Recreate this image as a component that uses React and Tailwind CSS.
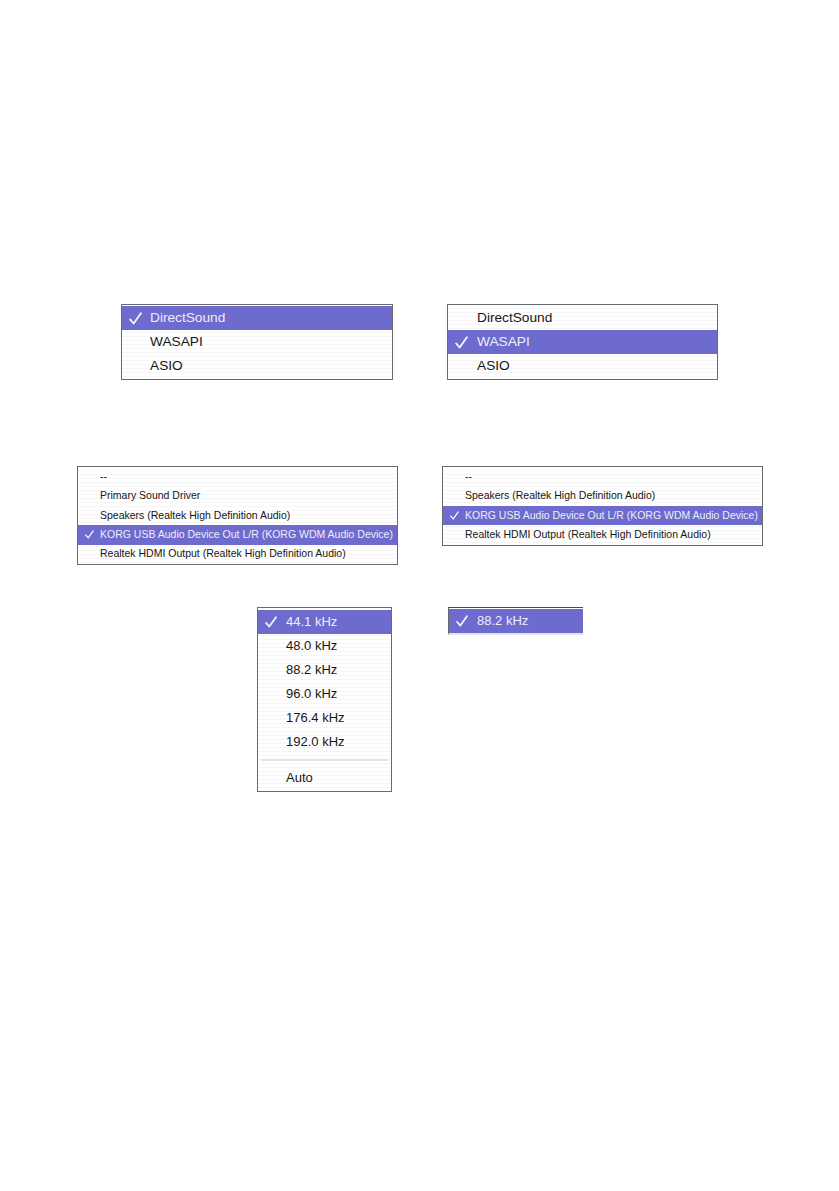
import React from 'react';

const stripes =
  'bg-[repeating-linear-gradient(to_bottom,#ffffff_0px,#ffffff_3px,#f6f6f6_3px,#f6f6f6_4px)]';

const Check = ({ size }) => (
  <svg width={size} height={size} viewBox="0 0 12 12" className="shrink-0">
    <path d="M1 6.8 L4.3 10.6 L11 1.2" fill="none" stroke="#f4f4ff" strokeWidth="1.7" strokeLinecap="round" strokeLinejoin="round" />
  </svg>
);

// one popup menu, items rendered as rows
const Menu = ({ items, selected, width, rowH, text, indent, check, className = '' }) => (
  <div className={`${stripes} border border-[#6a6a6a] ${className}`} style={{ width }}>
    {items.map((item, i) =>
      item === '---' ? (
        <div key={i} className="h-[12px] flex items-center px-[3px]">
          <div className="h-[2px] w-full bg-[#e4e4e4]" />
        </div>
      ) : (
        <div
          key={i}
          className={`flex items-center ${i === selected ? 'bg-[#6d6bcd] text-[#eeeefa]' : 'text-[#161616]'}`}
          style={{ height: rowH, fontSize: text }}
        >
          <div className="flex items-center pl-[7px]" style={{ width: indent }}>
            {i === selected && <Check size={check} />}
          </div>
          <span className="whitespace-nowrap">{item}</span>
        </div>
      )
    )}
  </div>
);

const drivers = ['DirectSound', 'WASAPI', 'ASIO'];
const devicesA = [
  '--',
  'Primary Sound Driver',
  'Speakers (Realtek High Definition Audio)',
  'KORG USB Audio Device Out L/R (KORG WDM Audio Device)',
  'Realtek HDMI Output (Realtek High Definition Audio)',
];
const devicesB = [
  '--',
  'Speakers (Realtek High Definition Audio)',
  'KORG USB Audio Device Out L/R (KORG WDM Audio Device)',
  'Realtek HDMI Output (Realtek High Definition Audio)',
];
const rates = ['44.1 kHz', '48.0 kHz', '88.2 kHz', '96.0 kHz', '176.4 kHz', '192.0 kHz', '---', 'Auto'];

export default function App() {
  return (
    <div className="min-h-[1191px] w-[839px] bg-white pt-[304px] font-['Liberation_Sans',Arial,sans-serif]">
      {/* driver type */}
      <div className="flex items-start pl-[121px] gap-[54px]">
        <Menu items={drivers} selected={0} width={272} rowH={24} text="13.7px" indent={28} check={13} className="py-[1px]" />
        <Menu items={drivers} selected={1} width={271} rowH={24} text="13.7px" indent={29} check={13} className="py-[1px]" />
      </div>

      {/* output device */}
      <div className="flex items-start pl-[77px] gap-[44px] mt-[86px]">
        <Menu items={devicesA} selected={3} width={321} rowH={19.4} text="10.5px" indent={22} check={9} />
        <Menu items={devicesB} selected={2} width={321} rowH={19.4} text="10.5px" indent={22} check={9} />
      </div>

      {/* sample rate */}
      <div className="flex items-start pl-[257px] gap-[56px] mt-[42px]">
        <Menu items={rates} selected={0} width={135} rowH={24} text="13px" indent={28} check={12} className="pt-[2px] pb-[1px]" />
        <div className="w-[135px] border-t border-l border-t-[#4a4a4a] border-l-[#6a6a6a] border-b-2 border-b-[#e4e4ee] pt-[1px] bg-white">
          <div className="h-[24px] flex items-center bg-[#6d6bcd] text-[#eeeefa] text-[13px]">
            <div className="w-[28px] flex items-center pl-[7px]">
              <Check size={12} />
            </div>
            <span>88.2 kHz</span>
          </div>
        </div>
      </div>
    </div>
  );
}
